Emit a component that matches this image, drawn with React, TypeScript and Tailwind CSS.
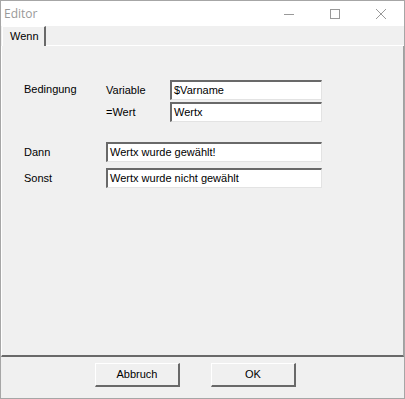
import React from 'react';

const ui = { fontFamily: '"Liberation Sans", Arial, sans-serif' };

function Field({ value, width }: { value: string; width: string }) {
  return (
    <div
      className={`${width} h-[20px] bg-white border-t-2 border-l-2 border-b border-r border-t-[#696969] border-l-[#696969] border-b-[#e3e3e3] border-r-[#e3e3e3] flex items-center pl-[2px] text-[11px] text-black leading-none`}
    >
      {value}
    </div>
  );
}

function Button({ label }: { label: string }) {
  return (
    <div className="w-[85px] h-[24px] bg-[#f0f0f0] border-t border-l border-t-white border-l-white border-b-2 border-r-2 border-b-[#696969] border-r-[#696969] flex items-center justify-center text-[11px] text-black">
      {label}
    </div>
  );
}

export default function App() {
  return (
    <div className="w-[405px] h-[399px] border border-[#a6a6a6] bg-[#f0f0f0] flex flex-col" style={ui}>
      {/* title bar */}
      <div className="h-[25px] bg-white flex items-center shrink-0">
        <span className="pl-[3px] text-[12px] text-[#999999]" style={{ fontFamily: '"Open Sans", "Noto Sans", sans-serif' }}>
          Editor
        </span>
        <div className="ml-auto flex items-center h-full">
          <div className="w-[46px] h-full flex items-center justify-center">
            <svg width="10" height="10" viewBox="0 0 10 10"><path d="M0 5.5h10" stroke="#999" strokeWidth="1" /></svg>
          </div>
          <div className="w-[46px] h-full flex items-center justify-center">
            <svg width="10" height="10" viewBox="0 0 10 10"><rect x="0.5" y="0.5" width="9" height="9" fill="none" stroke="#999" /></svg>
          </div>
          <div className="w-[46px] h-full flex items-center justify-center">
            <svg width="10" height="10" viewBox="0 0 10 10"><path d="M0 0L10 10M10 0L0 10" stroke="#999" strokeWidth="1" /></svg>
          </div>
        </div>
      </div>

      {/* tab strip */}
      <div className="h-[20px] flex items-end shrink-0">
        <div className="ml-[1px] h-[20px] w-[44px] border-t border-l border-t-white border-l-white border-r-2 border-r-[#696969] flex items-center pl-[7px] text-[11px] text-black">
          Wenn
        </div>
        <div className="flex-1 border-b border-b-white" />
      </div>

      {/* tab panel */}
      <div className="flex-1 border-l border-l-white border-r border-r-[#a0a0a0] border-b-2 border-b-[#696969] pl-[22px] pt-[34px] text-[11px] text-black">
        <div className="flex">
          <div className="w-[82px] pt-[1px]">Bedingung</div>
          <div className="flex flex-col gap-[2px]">
            <div className="flex items-center">
              <div className="w-[64px]">Variable</div>
              <Field value="$Varname" width="w-[152px]" />
            </div>
            <div className="flex items-center">
              <div className="w-[64px]">=Wert</div>
              <Field value="Wertx" width="w-[152px]" />
            </div>
          </div>
        </div>
        <div className="flex items-center mt-[20px]">
          <div className="w-[82px]">Dann</div>
          <Field value="Wertx wurde gewählt!" width="w-[216px]" />
        </div>
        <div className="flex items-center mt-[6px]">
          <div className="w-[82px]">Sonst</div>
          <Field value="Wertx wurde nicht gewählt" width="w-[216px]" />
        </div>
      </div>

      {/* footer */}
      <div className="h-[41px] shrink-0 flex items-start pt-[6px] pl-[94px] gap-[31px]">
        <Button label="Abbruch" />
        <Button label="OK" />
      </div>
    </div>
  );
}
